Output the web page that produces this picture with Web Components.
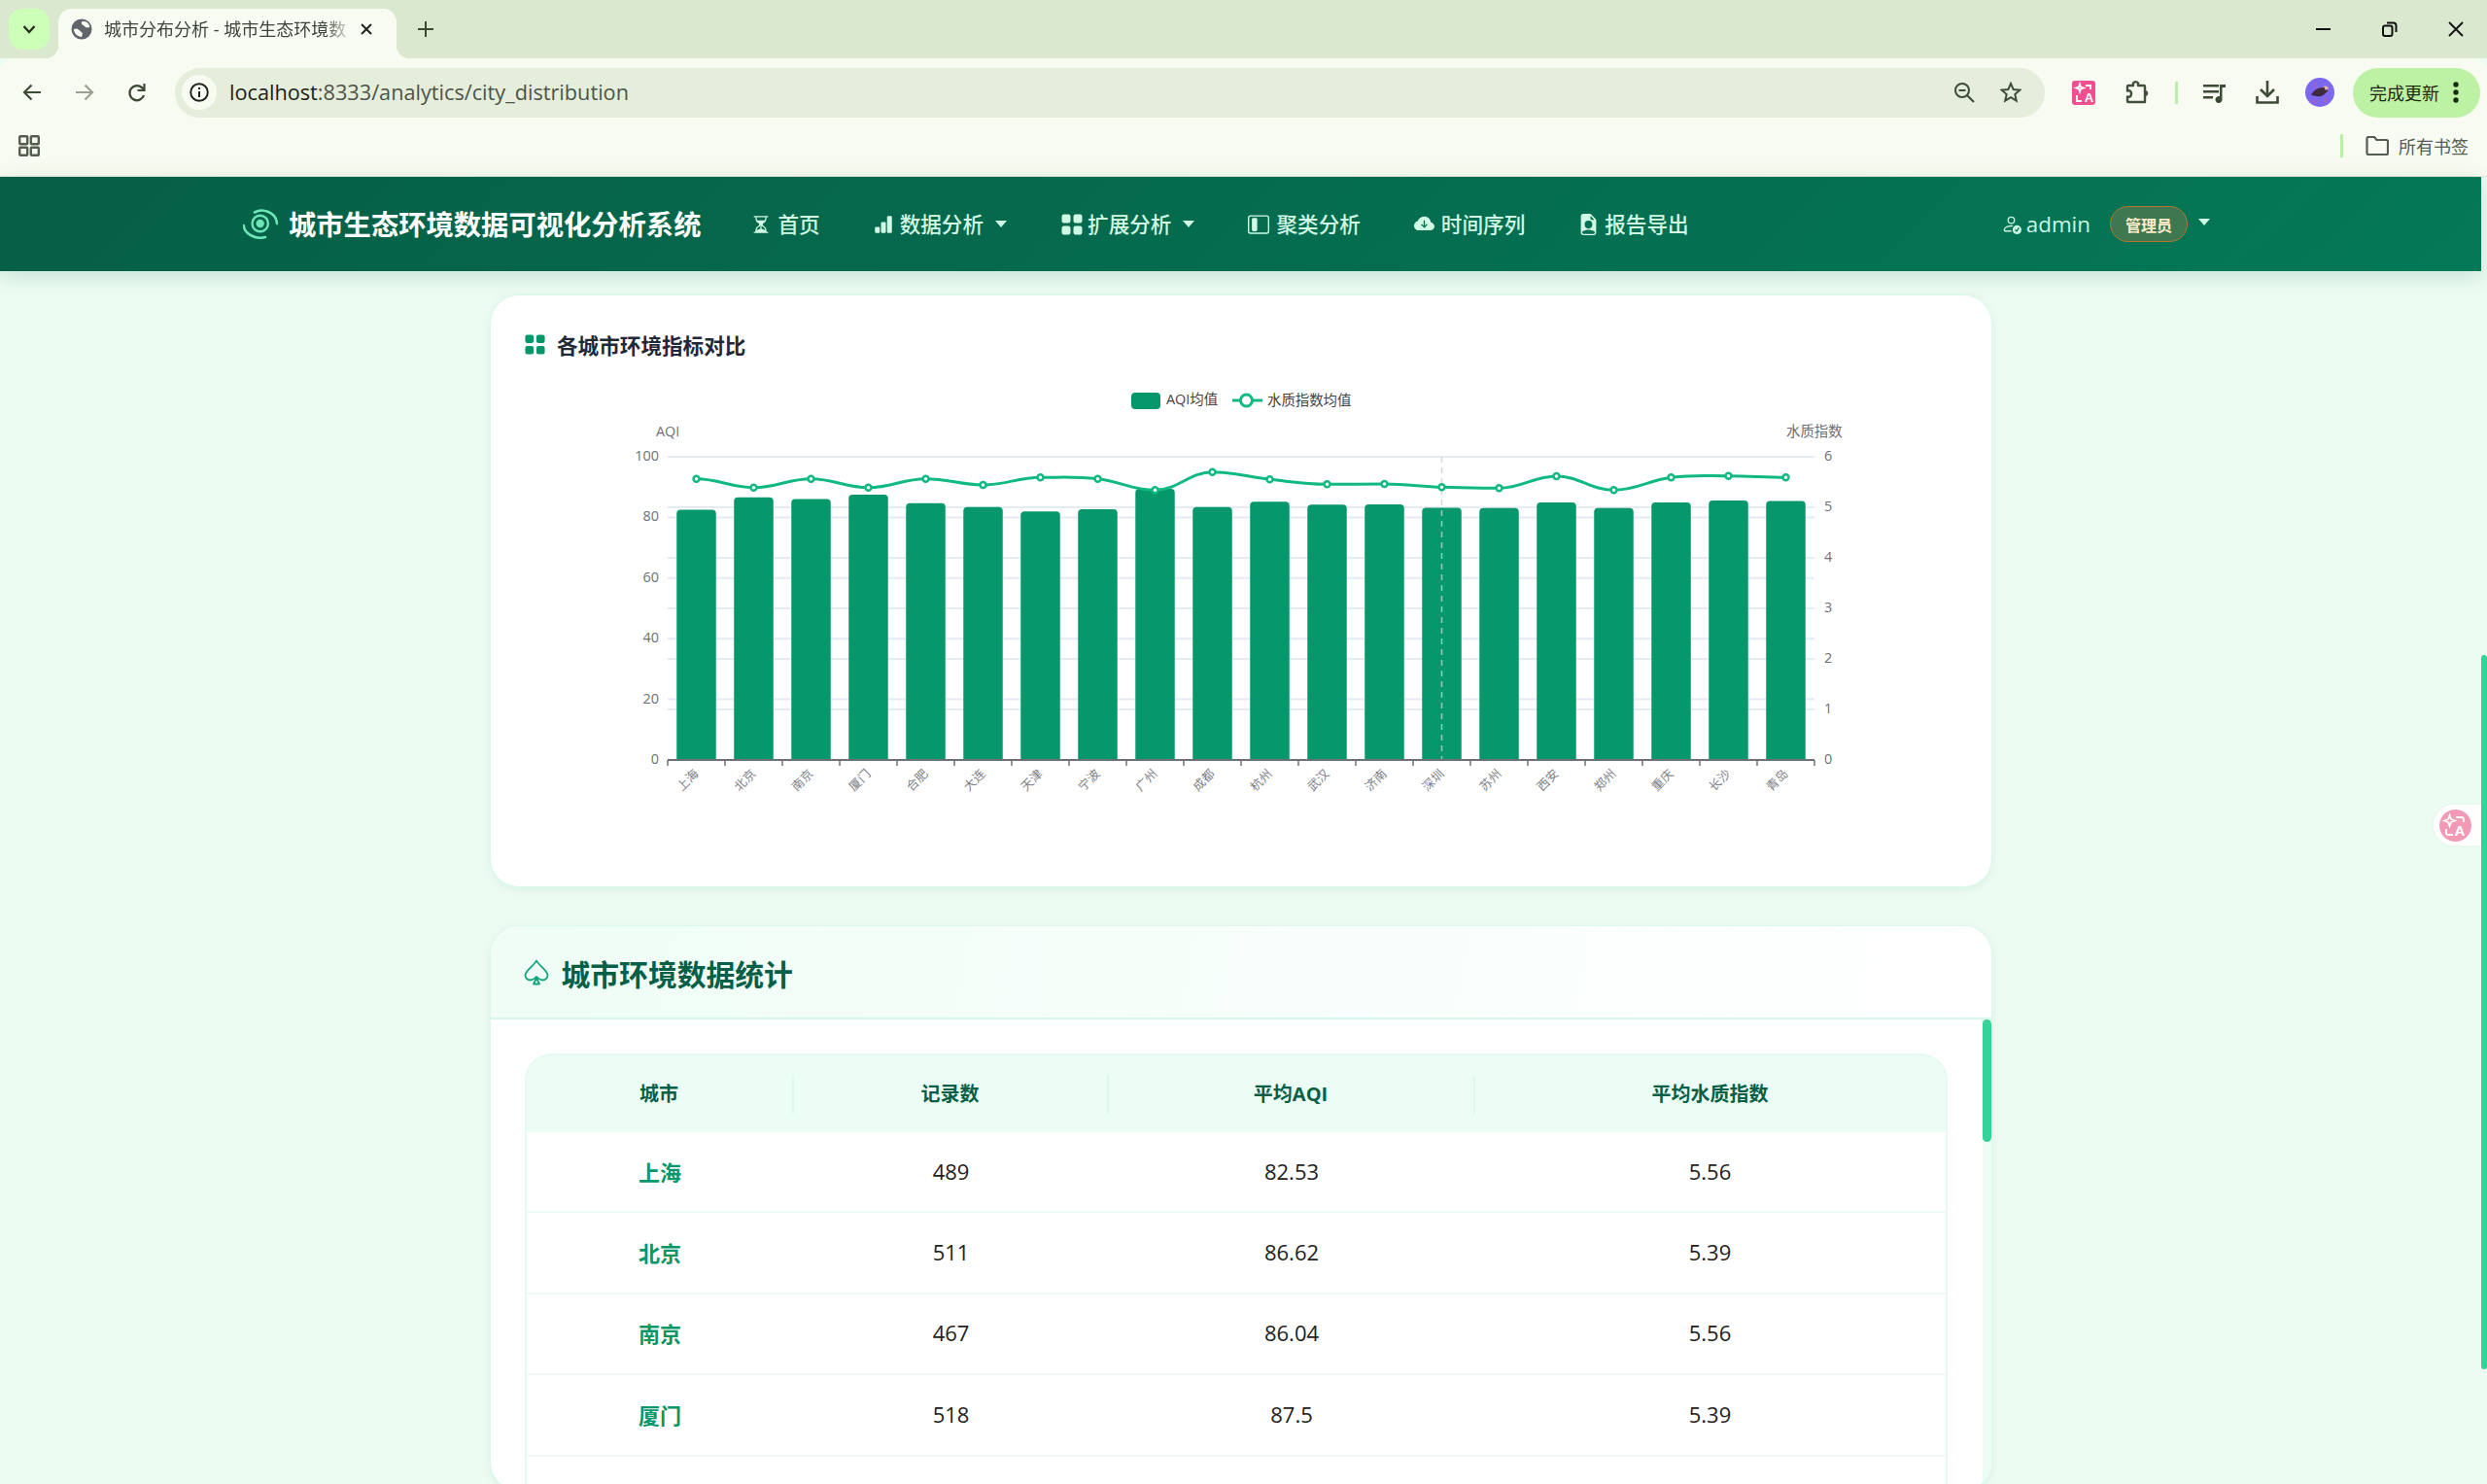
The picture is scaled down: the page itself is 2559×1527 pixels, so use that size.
<!DOCTYPE html>
<html lang="zh">
<head>
<meta charset="utf-8">
<title>城市分布分析 - 城市生态环境数据可视化分析系统</title>
<style>
  html, body { margin: 0; height: 1527px; overflow: hidden; background: #edfcf3; }
  body { font-family: "Open Sans", "Noto Sans CJK SC", sans-serif; }
  app-shell { width: 2559px; height: 1527px; }
</style>
</head>
<body>
<app-shell>
  <browser-chrome slot="chrome"></browser-chrome>
  <site-nav slot="nav">
    <nav-link icon="hourglass" w="20" h="20" style="margin-left:-2px">首页</nav-link>
    <nav-link icon="bars" w="20" h="20" caret>数据分析</nav-link>
    <nav-link icon="grid" w="24" h="24" gap="4" caret>扩展分析</nav-link>
    <nav-link icon="sidebar" w="22" h="22">聚类分析</nav-link>
    <nav-link icon="cloud" w="21" h="21">时间序列</nav-link>
    <nav-link icon="report" w="21" h="22" gap="6">报告导出</nav-link>
  </site-nav>
  <panel-card slot="main" variant="plain">
    <card-title slot="head" icon="grid">各城市环境指标对比</card-title>
    <aqi-chart></aqi-chart>
  </panel-card>
  <panel-card slot="main" variant="stats">
    <stats-head slot="head">城市环境数据统计</stats-head>
    <stat-table>
      <stat-row city="上海" count="489" aqi="82.53" water="5.56"></stat-row>
      <stat-row city="北京" count="511" aqi="86.62" water="5.39"></stat-row>
      <stat-row city="南京" count="467" aqi="86.04" water="5.56"></stat-row>
      <stat-row city="厦门" count="518" aqi="87.5" water="5.39"></stat-row>
      <stat-row></stat-row>
    </stat-table>
  </panel-card>
</app-shell>
<script>
// bootstrap-icons style paths, 16x16 box
const ICONS = {
  hourglass: 'M2.5 15a.5.5 0 1 1 0-1h1v-1a4.5 4.5 0 0 1 2.557-4.06c.29-.139.443-.377.443-.59v-.7c0-.213-.154-.451-.443-.59A4.5 4.5 0 0 1 3.5 3V2h-1a.5.5 0 0 1 0-1h11a.5.5 0 0 1 0 1h-1v1a4.5 4.5 0 0 1-2.557 4.06c-.29.139-.443.377-.443.59v.7c0 .213.154.451.443.59A4.5 4.5 0 0 1 12.5 13v1h1a.5.5 0 0 1 0 1h-11zm2-13v1c0 .537.12 1.045.337 1.5h6.326c.216-.455.337-.963.337-1.5V2h-7zm3 6.35c0 .701-.478 1.236-1.011 1.492A3.5 3.5 0 0 0 4.5 13s.866-1.299 3-1.48V8.35zm1 0v3.17c2.134.181 3 1.48 3 1.48a3.5 3.5 0 0 0-1.989-3.158C8.978 9.586 8.5 9.052 8.5 8.351z',
  bars: 'M1 11a1 1 0 0 1 1-1h2a1 1 0 0 1 1 1v3a1 1 0 0 1-1 1H2a1 1 0 0 1-1-1v-3zm5-4a1 1 0 0 1 1-1h2a1 1 0 0 1 1 1v7a1 1 0 0 1-1 1H7a1 1 0 0 1-1-1V7zm5-5a1 1 0 0 1 1-1h2a1 1 0 0 1 1 1v12a1 1 0 0 1-1 1h-2a1 1 0 0 1-1-1V2z',
  grid: 'M1 2.5A1.5 1.5 0 0 1 2.5 1h3A1.5 1.5 0 0 1 7 2.5v3A1.5 1.5 0 0 1 5.5 7h-3A1.5 1.5 0 0 1 1 5.5v-3zm8 0A1.5 1.5 0 0 1 10.5 1h3A1.5 1.5 0 0 1 15 2.5v3A1.5 1.5 0 0 1 13.5 7h-3A1.5 1.5 0 0 1 9 5.5v-3zm-8 8A1.5 1.5 0 0 1 2.5 9h3A1.5 1.5 0 0 1 7 10.5v3A1.5 1.5 0 0 1 5.5 15h-3A1.5 1.5 0 0 1 1 13.5v-3zm8 0A1.5 1.5 0 0 1 10.5 9h3a1.5 1.5 0 0 1 1.5 1.5v3a1.5 1.5 0 0 1-1.5 1.5h-3A1.5 1.5 0 0 1 9 13.5v-3z',
  sidebar: 'M14 2a1 1 0 0 1 1 1v10a1 1 0 0 1-1 1H2a1 1 0 0 1-1-1V3a1 1 0 0 1 1-1h12zM2 1a2 2 0 0 0-2 2v10a2 2 0 0 0 2 2h12a2 2 0 0 0 2-2V3a2 2 0 0 0-2-2H2zM3 4a1 1 0 0 1 1-1h2a1 1 0 0 1 1 1v8a1 1 0 0 1-1 1H4a1 1 0 0 1-1-1V4z',
  cloud: 'M8 2a5.53 5.53 0 0 0-3.594 1.342c-.766.66-1.321 1.52-1.464 2.383C1.266 6.095 0 7.555 0 9.318 0 11.366 1.708 13 3.781 13h8.906C14.502 13 16 11.57 16 9.773c0-1.636-1.242-2.969-2.834-3.194C12.923 3.999 10.69 2 8 2zm2.354 6.854-2 2a.5.5 0 0 1-.708 0l-2-2a.5.5 0 1 1 .708-.708L7.5 9.293V5.5a.5.5 0 0 1 1 0v3.793l1.146-1.147a.5.5 0 0 1 .708.708z',
  report: 'M9.293 0H4a2 2 0 0 0-2 2v12a2 2 0 0 0 2 2h8a2 2 0 0 0 2-2V4.707A1 1 0 0 0 13.707 4L10 .293A1 1 0 0 0 9.293 0zM9.5 3.5v-2l3 3h-2a1 1 0 0 1-1-1zM11 8a3 3 0 1 1-6 0 3 3 0 0 1 6 0zm2 5.755V14a1 1 0 0 1-1 1H4a1 1 0 0 1-1-1v-.245S4 12 8 12s5 1.755 5 1.755z',
  person: 'M12.5 16a3.5 3.5 0 1 0 0-7 3.5 3.5 0 0 0 0 7Zm1.679-4.493-1.335 2.226a.75.75 0 0 1-1.174.144l-.774-.773a.5.5 0 0 1 .708-.708l.547.548 1.17-1.951a.5.5 0 1 1 .858.514ZM11 5a3 3 0 1 1-6 0 3 3 0 0 1 6 0ZM8 7a2 2 0 1 0 0-4 2 2 0 0 0 0 4ZM8.256 14a4.474 4.474 0 0 1-.229-1.004H3c.001-.246.154-.986.832-1.664C4.484 10.68 5.711 10 8 10c.26 0 .507.009.74.025.226-.341.496-.65.804-.918C9.077 9.038 8.564 9 8 9c-5 0-6 3-6 4s1 1 1 1h5.256Z'
}

class BsIcon extends HTMLElement {
  connectedCallback(){
    const w = this.getAttribute('w') || 16, h = this.getAttribute('h') || w
    this.attachShadow({mode:'open'}).innerHTML = `
      <style>:host{display:inline-flex;flex:none}svg{display:block;fill:currentColor}</style>
      <svg width="${w}" height="${h}" viewBox="0 0 16 16" preserveAspectRatio="none"><path fill-rule="evenodd" d="${ICONS[this.getAttribute('name')]}"/></svg>`
  }
}
customElements.define('bs-icon', BsIcon)

const chromeTemplate = document.createElement('template')
chromeTemplate.innerHTML = `
<style>
  :host{display:block;font-family:"Open Sans","Noto Sans CJK SC",sans-serif;color:#1f2a1c}
  svg{display:block}
  .strip{height:60px;background:#dae8cf;display:flex;align-items:flex-end;position:relative}
  .tabsearch{width:42px;height:42px;border-radius:14px;background:#ceffb8;margin:0 0 9px 9px;display:flex;align-items:center;justify-content:center}
  .tab{position:relative;width:348px;height:51px;margin-left:9px;background:#f8fbf1;border-radius:14px 14px 0 0;display:flex;align-items:center;box-sizing:border-box;padding:0 0 9px 13px}
  .tab::before,.tab::after{content:"";position:absolute;bottom:0;width:14px;height:14px}
  .tab::before{left:-14px;background:radial-gradient(circle at 0 0,transparent 14px,#f8fbf1 14.5px)}
  .tab::after{right:-14px;background:radial-gradient(circle at 100% 0,transparent 14px,#f8fbf1 14.5px)}
  .title{margin-left:12px;width:252px;white-space:nowrap;font-size:18px;line-height:24px;color:#3c4338;
    -webkit-mask-image:linear-gradient(90deg,#000 90%,rgba(0,0,0,.15))}
  .x{margin-left:12px}
  .plus{margin:0 0 9px 18px;width:24px;height:42px;display:flex;align-items:center;justify-content:center}
  .win{margin-left:auto;display:flex;margin-right:-2px;height:60px;align-items:center}
  .win div{width:68px;display:flex;justify-content:center}
  .win div:nth-child(2){width:69px}
  .bar{background:#f8fbf1;height:70px;border-radius:14px 14px 0 0;display:flex;align-items:center;padding-left:6px;box-sizing:border-box}
  .btn{width:54px;height:51px;display:flex;align-items:center;justify-content:center;flex:none}
  .omni{width:1924px;height:51px;margin-left:12px;background:#e5eddb;border-radius:26px;display:flex;align-items:center;flex:none}
  .chip{width:36px;height:36px;margin-left:7px;border-radius:50%;background:#f8fbf1;display:flex;align-items:center;justify-content:center}
  .url{margin-left:13px;font-size:21.7px;color:#4d5449;white-space:nowrap;line-height:28px}
  .url b{font-weight:400;color:#1c2119}
  .omni .end{margin-left:auto;display:flex;padding-right:11px}
  .omni .end div{width:48px;display:flex;justify-content:center}
  .sep{width:3px;height:23px;background:#b9f0a4;flex:none}
  .update{margin-left:7px;width:131px;height:51px;background:#bdf2a5;border-radius:26px;display:flex;align-items:center;box-sizing:border-box;padding-left:17px;font-size:18px;color:#172b12;flex:none;white-space:nowrap}
  .update svg{margin-left:14px}
  .marks{background:#f8fbf1;height:52px;box-sizing:border-box;padding:0 0 12px 19px;display:flex;align-items:center;border-bottom:1px solid #e3e6d7}
  .marks .sep{height:24px;margin-left:auto}
  .marks .all{margin-left:27px;margin-right:18px;display:flex;align-items:center;gap:10px;font-size:18px;color:#555c50;white-space:nowrap}
</style>
<div class="strip">
  <div class="tabsearch"><svg width="16" height="10" viewBox="0 0 16 10"><path d="M2.5 2 8 8l5.5-6" fill="none" stroke="#26331f" stroke-width="2.4"/></svg></div>
  <div class="tab">
    <svg width="22" height="22" viewBox="0 0 22 22"><circle cx="11" cy="11" r="10.5" fill="#5f6568"/><path d="M11 3.500c2-1 5-.5 7 2 .8 1 1.200 2 1.400 3.200-2.400 1.300-4.400.6-5.400-.7-1-1.200-2.500-1.500-3-2.600-.2-.7-.1-1.400 0-1.900zM3 11c2-1 4.500-.5 5.500 1 1 1.300 2.700 1.800 3.200 3 .4 1.200-.2 3-.9 3.900-3.600-.2-6.800-2.800-7.700-6.400-.1-.5-.1-1-.1-1.500z" fill="#f8fbf1"/></svg>
    <div class="title">城市分布分析 - 城市生态环境数</div>
    <svg class="x" width="12" height="12" viewBox="0 0 12 12"><path d="M1 1l10 10M11 1 1 11" stroke="#20281c" stroke-width="2"/></svg>
  </div>
  <div class="plus"><svg width="16" height="16" viewBox="0 0 16 16"><path d="M8 0v16M0 8h16" stroke="#3c4a35" stroke-width="2"/></svg></div>
  <div class="win">
    <div><svg width="15" height="4" viewBox="0 0 15 4"><path d="M0 2h15" stroke="#111" stroke-width="2"/></svg></div>
    <div><svg width="16" height="16" viewBox="0 0 16 16" fill="none" stroke="#111" stroke-width="2"><rect x="1" y="4.5" width="9.5" height="10.5" rx="2"/><path d="M5 1.500h6.500a3 3 0 0 1 3 3V11"/></svg></div>
    <div><svg width="16" height="16" viewBox="0 0 16 16"><path d="M1 1l14 14M15 1 1 15" stroke="#111" stroke-width="1.8"/></svg></div>
  </div>
</div>
<div class="bar">
  <div class="btn"><svg width="20" height="18" viewBox="0 0 20 18" fill="none" stroke="#3e4a38" stroke-width="2.2"><path d="M19 9H2M9.500 1.500 2 9l7.500 7.500"/></svg></div>
  <div class="btn"><svg width="20" height="18" viewBox="0 0 20 18" fill="none" stroke="#9aa294" stroke-width="2.2"><path d="M1 9h17M10.500 1.500 18 9l-7.500 7.500"/></svg></div>
  <div class="btn"><svg width="20" height="22" viewBox="0 0 20 22" fill="none" stroke="#3e4a38" stroke-width="2.4"><path d="M17 14a7.500 7.500 0 1 1-2-7.800L17 8"/><path d="M17.500 2v7h-7" stroke-width="2.2"/></svg></div>
  <div class="omni">
    <div class="chip"><svg width="20" height="20" viewBox="0 0 20 20"><circle cx="10" cy="10" r="8.8" fill="none" stroke="#1b2118" stroke-width="1.9"/><path d="M10 9v6M10 5v2" stroke="#1b2118" stroke-width="2"/></svg></div>
    <div class="url"><b>localhost</b>:8333/analytics/city_distribution</div>
    <div class="end">
      <div><svg width="22" height="22" viewBox="0 0 22 22" fill="none" stroke="#3f4a39" stroke-width="2"><circle cx="9" cy="9" r="7"/><path d="M5.500 9h7M14 14l7 7"/></svg></div>
      <div><svg width="22" height="22" viewBox="0 0 22 22" fill="none" stroke="#3f4a39" stroke-width="2"><path d="m11 2 2.700 6.100 6.600.6-5 4.400 1.500 6.500L11 16.200 5.200 19.600l1.500-6.500-5-4.400 6.600-.6z"/></svg></div>
    </div>
  </div>
  <div class="btn" style="margin-left:12px;width:55px"><svg width="24" height="25" viewBox="0 0 24 25"><rect width="24" height="25" rx="3" fill="#f0508f"/><path d="M8 3.500 9 6.500 12 7.500 9 8.500 8 11.500 7 8.500 4 7.500 7 6.500zM14 5h5v4M5 15v6h5" fill="none" stroke="#fff" stroke-width="1.8"/><text x="17.500" y="22" text-anchor="middle" font-size="13" font-weight="700" fill="#fff" font-family="Liberation Sans,sans-serif">A</text></svg></div>
  <div class="btn" style="width:55px"><svg width="24" height="26" viewBox="0 0 24 26" fill="none" stroke="#41503a" stroke-width="2.4" stroke-linejoin="round"><path d="M3 7h5V4.500a3 3 0 0 1 5 0V7h6a1 1 0 0 1 1 1v16H3a1 1 0 0 1-1-1v-4.500c3 1 4-1 4-3s-1-4-4-3V8a1 1 0 0 1 1-1z" transform="translate(0 -1)"/><path d="M20 12c3 0 3 4 0 4" stroke-width="2"/></svg></div>
  <div class="sep" style="margin:0 11px 0 12px"></div>
  <div class="btn"><svg width="24" height="24" viewBox="0 0 24 24"><path d="M0 4h16v2.400H0zM0 10h16v2.400H0zM0 16h10v2.400H0z" fill="#3d4a36"/><path d="M17 4h6v3h-3.500v12.500a3.500 3.500 0 1 1-2.500-3.300z" fill="#3d4a36"/></svg></div>
  <div class="btn"><svg width="24" height="24" viewBox="0 0 24 24" fill="none" stroke="#3d4a36" stroke-width="2.6"><path d="M12 0v15M5 9l7 7 7-7"/><path d="M1.500 16v6.500h21V16"/></svg></div>
  <div class="btn"><svg width="30" height="30" viewBox="0 0 30 30"><circle cx="15" cy="15" r="15" fill="#7b68ee"/><path d="M6 18c2-5 7-8 13-8 3 0 4 2 4 4-2 1-3 4-7 5-4 1-6-1-10-1z" fill="#3e2a3c"/><path d="M19 9c2-1 4 0 5 2l-3 2z" fill="#e9b7a8"/><path d="M11 4v7M9 22v5M21 20v6" stroke="#b65f9e" stroke-width="1.2"/></svg></div>
  <div class="update">完成更新<svg width="6" height="22" viewBox="0 0 6 22"><circle cx="3" cy="3" r="2.700" fill="#172b12"/><circle cx="3" cy="11" r="2.700" fill="#172b12"/><circle cx="3" cy="19" r="2.700" fill="#172b12"/></svg></div>
</div>
<div class="marks">
  <svg width="22" height="22" viewBox="0 0 22 22" fill="none" stroke="#555c50" stroke-width="2.4"><rect x="1.2" y="1.2" width="8" height="8" rx=".8"/><rect x="12.8" y="1.2" width="8" height="8" rx=".8"/><rect x="1.2" y="12.8" width="8" height="8" rx=".8"/><rect x="12.8" y="12.8" width="8" height="8" rx=".8"/></svg>
  <div class="sep"></div>
  <div class="all" style="margin-left:23px;margin-right:19px"><svg width="24" height="20" viewBox="0 0 24 20" fill="none" stroke="#555c50" stroke-width="2.2"><path d="M1.500 2.500a1.500 1.500 0 0 1 1.500-1.500h6l2.500 3h10a1.500 1.500 0 0 1 1.500 1.500V17.500A1.500 1.500 0 0 1 21.500 19H3A1.500 1.500 0 0 1 1.500 17.500z"/></svg>所有书签</div>
</div>`

class BrowserChrome extends HTMLElement {
  constructor(){
    super()
    this.attachShadow({mode:'open'}).appendChild(chromeTemplate.content.cloneNode(true))
  }
}
customElements.define('browser-chrome', BrowserChrome)

class SiteNav extends HTMLElement {
  constructor(){
    super()
    this.attachShadow({mode:'open'}).innerHTML = `
    <style>
      :host{display:flex;align-items:center;height:97px;box-sizing:border-box;width:2553px;padding:0 279px 0 250px;
        background:linear-gradient(135deg,#065f46,#047857);box-shadow:0 6px 22px rgba(6,95,70,.16);position:relative;z-index:2;
        font-family:"Open Sans","Noto Sans CJK SC",sans-serif}
      .brand{display:flex;align-items:center;gap:11px;margin-right:54px;font-weight:700;font-size:28.3px;color:#fff;white-space:nowrap;line-height:40px}
      svg{display:block}
      .links{display:flex;gap:55px}
      .user{margin-left:auto;display:flex;align-items:center;color:#c9f6e3}
      .name{font-size:22.4px;line-height:32px;margin-left:5px}
      .role{margin-left:20px;width:80px;height:37px;box-sizing:border-box;border:1.5px solid #b5762f;border-radius:19px;background:#3f7850;color:#fdeccb;font-size:16px;font-weight:700;display:flex;align-items:center;justify-content:center}
      .caret{margin-left:11px;margin-top:-5px;width:0;height:0;border:6px solid transparent;border-top:7px solid #d1fae5;border-bottom:0}
    </style>
    <div class="brand">
      <svg width="36" height="31" viewBox="0 0 36 31" fill="none" stroke="#6ee7b7" stroke-linecap="round"><circle cx="17.700" cy="15" r="4.200" fill="#6ee7b7" stroke="none"/><circle cx="17.700" cy="15" r="8.200" stroke-width="2.4"/><path d="M0.800 17C1.500 25 12 32 23 29" stroke-width="2.6"/><path d="M12 3.500C20-1 34 3 35 15" stroke-width="2.6"/></svg>
      城市生态环境数据可视化分析系统
    </div>
    <div class="links"><slot></slot></div>
    <div class="user">
      <bs-icon name="person" w="21" h="21"></bs-icon>
      <span class="name">admin</span>
      <span class="role">管理员</span>
      <span class="caret"></span>
    </div>`
  }
}
customElements.define('site-nav', SiteNav)

class NavLink extends HTMLElement {
  connectedCallback(){
    this.attachShadow({mode:'open'}).innerHTML = `
    <style>
      :host{display:flex;align-items:center;color:#d1fae5;font-size:21.6px;font-weight:500;white-space:nowrap;line-height:32px}
      bs-icon{margin-right:${this.getAttribute('gap') || 7}px}
      .caret{margin-left:12px;width:0;height:0;border:6px solid transparent;border-top:7px solid #d1fae5;border-bottom:0}
    </style>
    <bs-icon name="${this.getAttribute('icon')}" w="${this.getAttribute('w')}" h="${this.getAttribute('h')}"></bs-icon><slot></slot>${this.hasAttribute('caret') ? '<span class="caret"></span>' : ''}`
  }
}
customElements.define('nav-link', NavLink)

class PanelCard extends HTMLElement {
  constructor(){
    super()
    this.attachShadow({mode:'open'}).innerHTML = `
    <style>
      :host{display:block;width:1546px;box-sizing:border-box;background:#fff;border:1px solid #dcf9ec;border-bottom-width:2px;border-radius:30px;box-shadow:0 2px 8px rgba(6,95,70,.08);overflow:hidden;position:relative}
      :host([variant=plain]){height:611px;padding:33px 36px 0}
      :host([variant=stats]){height:583px}
      .scroll{display:none}
      :host([variant=stats]) .body{padding:35px 46px 0 35px}
      :host([variant=stats]) .scroll{display:block;position:absolute;right:0;top:96px;bottom:0;width:9px;background:#ecfdf5}
      .thumb{height:126px;border-radius:5px;background:#34d399}
    </style>
    <slot name="head"></slot>
    <div class="body"><slot></slot></div>
    <div class="scroll"><div class="thumb"></div></div>`
  }
}
customElements.define('panel-card', PanelCard)

class CardTitle extends HTMLElement {
  connectedCallback(){
    this.attachShadow({mode:'open'}).innerHTML = `
    <style>
      :host{display:flex;align-items:center;gap:11px;height:34px;font-size:21.6px;font-weight:700;color:#1f2937;margin-bottom:14px}
      bs-icon{color:#059669;margin-left:-1.5px}
    </style>
    <bs-icon name="${this.getAttribute('icon')}" w="23" h="23"></bs-icon><slot></slot>`
  }
}
customElements.define('card-title', CardTitle)

class StatsHead extends HTMLElement {
  constructor(){
    super()
    this.attachShadow({mode:'open'}).innerHTML = `
    <style>
      :host{display:flex;align-items:center;gap:13px;height:96px;box-sizing:border-box;padding:1px 35px 0 34px;border-bottom:2px solid #d6f8e8;
        background:linear-gradient(100deg,#effdf6,#fff);font-size:29.8px;font-weight:700;color:#065f46}
      svg{display:block}
    </style>
    <svg width="26" height="27" viewBox="0 0 26 27" fill="none" stroke="#10a37a" stroke-width="1.8" stroke-linejoin="round"><path d="M13 1.500c2 4.500 11.500 10 11.500 15 0 3-2.500 5-5 5-2.300 0-4.300-1-6.500-3.500-2.200 2.500-4.200 3.500-6.500 3.500-2.500 0-5-2-5-5 0-5 9.500-10.500 11.500-15z"/><path d="M13 19.500l3 6H10z"/></svg>
    <slot></slot>`
  }
}
customElements.define('stats-head', StatsHead)

const CITIES = ['上海','北京','南京','厦门','合肥','大连','天津','宁波','广州','成都','杭州','武汉','济南','深圳','苏州','西安','郑州','重庆','长沙','青岛']
const AQI = [82.53,86.62,86.04,87.5,84.7,83.4,82,82.7,89.4,83.4,85.2,84.2,84.3,83.2,83.1,84.9,83.1,84.9,85.6,85.4]
// y pixels of the water-quality line, same coordinates as the viewBox
const WATER_Y = [492.7,501.7,492.7,501.7,492.7,499,491.3,492.7,504.3,485.7,493.3,498.3,498,501.3,502.3,490,504.3,491.3,489.7,491.3]

class AqiChart extends HTMLElement {
  connectedCallback(){
    const L = 686, R = 1866, T = 470, B = 782, band = (R - L) / 20
    const cx = i => L + band * (i + .5)
    let s = ''
    for (let i = 0; i <= 5; i++) {
      const y = T + (B - T) * i / 5
      if (i < 5) s += `<path d="M${L} ${y}H${R}" class="grid"/>`
      s += `<text x="677" y="${y + 4}" text-anchor="end" class="ax">${100 - i * 20}</text>`
    }
    for (let i = 0; i <= 6; i++) {
      const y = T + (B - T) * i / 6
      if (i < 6) s += `<path d="M${L} ${y}H${R}" class="grid"/>`
      s += `<text x="1876" y="${y + 4}" class="ax">${6 - i}</text>`
    }
    AQI.forEach((v, i) => {
      const top = B - v * 3.12, x = cx(i) - 20.25
      s += `<path d="M${x} ${B}V${top + 4}q0-4 4-4h32.5q4 0 4 4V${B}z" fill="#06986b"/>`
    })
    s += `<path d="M${cx(13)} ${T}V${B}" stroke="#c9cfd3" stroke-opacity=".8" stroke-width="1.5" stroke-dasharray="6 5"/>`
    s += `<path d="M${L} ${B}H${R}" stroke="#6e7079" stroke-width="2"/>`
    for (let i = 0; i <= 20; i++) s += `<path d="M${L + band * i} ${B}v6" stroke="#6e7079" stroke-width="1.5"/>`
    CITIES.forEach((c, i) => {
      s += `<text transform="translate(${cx(i) + 3} 797) rotate(-45)" text-anchor="end" class="tick">${c}</text>`
    })
    // smooth line, flat tangents at the local peaks
    const tan = i => {
      const a = WATER_Y[i - 1], b = WATER_Y[i], c = WATER_Y[i + 1]
      if (a === undefined || c === undefined || (b - a) * (c - b) <= 0) return 0
      return (c - a) * .2
    }
    let d = `M${cx(0)} ${WATER_Y[0]}`
    for (let i = 1; i < 20; i++) {
      d += `C${cx(i - 1) + band * .4} ${WATER_Y[i - 1] + tan(i - 1)} ${cx(i) - band * .4} ${WATER_Y[i] - tan(i)} ${cx(i)} ${WATER_Y[i]}`
    }
    s += `<path d="${d}" fill="none" stroke="#10b981" stroke-width="3"/>`
    WATER_Y.forEach((y, i) => { s += `<circle cx="${cx(i)}" cy="${y}" r="3" fill="#fff" stroke="#10b981" stroke-width="2.4"/>` })

    this.attachShadow({mode:'open'}).innerHTML = `
    <style>
      :host{display:block}
      svg{display:block}
      text{font-family:"Open Sans","Noto Sans CJK SC",sans-serif;font-size:14.4px}
      .grid{stroke:#e6eaf4;stroke-width:2;fill:none}
      .ax{fill:#6e7079}
      .tick{fill:#7d8087;font-size:12.5px}
      .lg{fill:#444}
    </style>
    <svg width="1472" height="490" viewBox="540 385 1472 490">
      <rect x="1163" y="404" width="30" height="17" rx="4" fill="#06986b"/>
      <text x="1199" y="416" class="lg">AQI均值</text>
      <path d="M1267 412h31" stroke="#10b981" stroke-width="3"/>
      <circle cx="1281.5" cy="412" r="6" fill="#fff" stroke="#10b981" stroke-width="3"/>
      <text x="1303" y="417" class="lg">水质指数均值</text>
      <text x="674" y="449" class="ax">AQI</text>
      <text x="1837" y="449" class="ax">水质指数</text>
      ${s}
    </svg>`
  }
}
customElements.define('aqi-chart', AqiChart)

const COLUMNS = '275px 324px 377px 1fr'

class StatTable extends HTMLElement {
  constructor(){
    super()
    this.attachShadow({mode:'open'}).innerHTML = `
    <style>
      :host{display:block;width:1464px;box-sizing:border-box;border:2px solid #e6faf1;border-bottom:0;border-radius:28px 28px 0 0;overflow:hidden}
      .head{display:grid;grid-template-columns:${COLUMNS};height:79px;align-items:center;background:#ecfdf5;font-size:20px;font-weight:700;color:#065f46;text-align:center}
      .head div{line-height:40px;border-right:2px solid #dff8ec}
      .head div:last-child{border:0}
    </style>
    <div class="head"><div>城市</div><div>记录数</div><div>平均AQI</div><div>平均水质指数</div></div>
    <slot></slot>`
  }
}
customElements.define('stat-table', StatTable)

class StatRow extends HTMLElement {
  connectedCallback(){
    const a = n => this.getAttribute(n) || ''
    this.attachShadow({mode:'open'}).innerHTML = `
    <style>
      :host{display:grid;grid-template-columns:${COLUMNS};height:83.4px;box-sizing:border-box;padding-bottom:2px;align-items:center;border-bottom:2px solid #effbf6;text-align:center;font-size:22px;color:#222}
      .city{font-weight:700;color:#059669}
    </style>
    <div class="city">${a('city')}</div><div>${a('count')}</div><div>${a('aqi')}</div><div>${a('water')}</div>`
  }
}
customElements.define('stat-row', StatRow)

class AppShell extends HTMLElement {
  constructor(){
    super()
    this.attachShadow({mode:'open'}).innerHTML = `
    <style>
      :host{display:flex;flex-direction:column;position:relative;overflow:hidden;background:#edfcf3}
      ::slotted(*){flex:none}
      main{flex:none;display:flex;flex-direction:column;align-items:center;gap:38px;width:2553px;padding-top:24px;box-sizing:border-box}
      .sb{position:absolute;right:0;top:674px;width:6px;height:735px;border-radius:3px;background:#34d399}
      .float{position:absolute;right:6px;top:828px;width:49px;height:42px;box-sizing:border-box;border-radius:21px 0 0 21px;background:#fff;display:flex;align-items:center;padding-left:6px;box-shadow:0 0 4px rgba(0,0,0,.04)}
      svg{display:block}
    </style>
    <slot name="chrome"></slot>
    <slot name="nav"></slot>
    <main><slot name="main"></slot></main>
    <div class="sb"></div>
    <div class="float"><svg width="33" height="33" viewBox="0 0 33 33"><circle cx="16.5" cy="16.5" r="16.5" fill="#f29ab5"/><path d="M10.500 6 12 10l4 1.500-4 1.500-1.500 4L9 13l-4-1.500L9 10zM17 8h6a2 2 0 0 1 2 2v3M7 20v4a2 2 0 0 0 2 2h5" fill="none" stroke="#fff" stroke-width="1.8"/><text x="21" y="27" text-anchor="middle" font-size="15" font-weight="700" fill="#fff" font-family="Liberation Sans,sans-serif">A</text></svg></div>`
  }
}
customElements.define('app-shell', AppShell)
</script>
</body>
</html>
